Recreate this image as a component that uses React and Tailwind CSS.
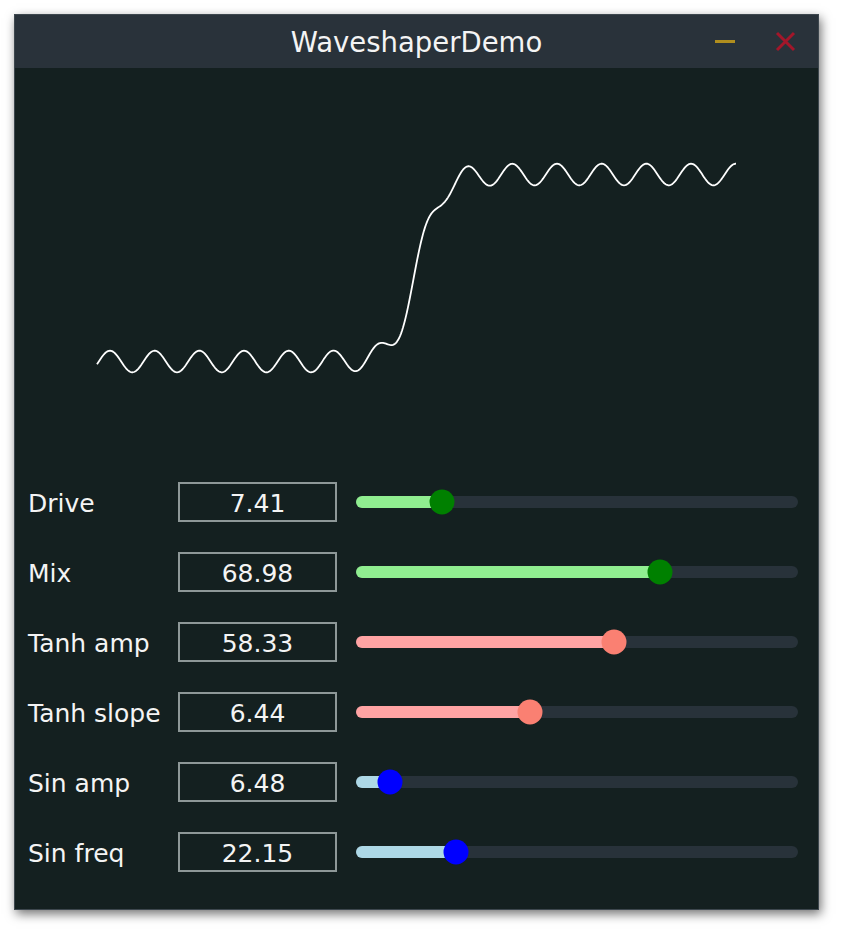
import React from "react";

// Slider rows — thumb position is px from track start (track is 443px)
const ROWS = [
  { label: "Drive", value: "7.41", pos: 86, fill: "bg-[#90ee90]", thumb: "bg-[#008000]" },
  { label: "Mix", value: "68.98", pos: 304, fill: "bg-[#90ee90]", thumb: "bg-[#008000]" },
  { label: "Tanh amp", value: "58.33", pos: 258, fill: "bg-[#ffa3a3]", thumb: "bg-[#fa8072]" },
  { label: "Tanh slope", value: "6.44", pos: 174, fill: "bg-[#ffa3a3]", thumb: "bg-[#fa8072]" },
  { label: "Sin amp", value: "6.48", pos: 34, fill: "bg-[#add8e6]", thumb: "bg-[#0000ff]" },
  { label: "Sin freq", value: "22.15", pos: 100, fill: "bg-[#add8e6]", thumb: "bg-[#0000ff]" },
];

function wavePath() {
  const pts = [];
  for (let x = 97; x <= 736; x += 1) {
    const y =
      268 -
      93.5 * Math.tanh(0.042 * (x - 417)) -
      10.8 * Math.sin((2 * Math.PI * (x - 98.8)) / 44.7);
    pts.push(`${x - 15},${(y - 68).toFixed(2)}`);
  }
  return "M" + pts.join(" L");
}

function Slider({ pos, fill, thumb }) {
  return (
    <div className="relative h-[12px] flex-1 rounded-full bg-[#28323a]">
      <div className={`h-full rounded-full ${fill}`} style={{ width: pos }} />
      <div
        className={`absolute top-1/2 h-[25px] w-[25px] -translate-x-1/2 -translate-y-1/2 rounded-full ${thumb}`}
        style={{ left: pos }}
      />
    </div>
  );
}

export default function App() {
  return (
    <div className="min-h-screen bg-white pl-[14px] pt-[14px]" style={{ fontFamily: "'DejaVu Sans', Verdana, sans-serif" }}>
      <div className="flex h-[896px] w-[805px] flex-col border border-[#3d474e] bg-[#142020] shadow-[2px_4px_10px_rgba(0,0,0,0.55)]">
        {/* Title bar */}
        <div className="relative flex h-[53px] shrink-0 items-center justify-center bg-[#29323a]">
          <span className="pt-[3px] text-[27.5px] leading-none text-[#f4f4f4]">WaveshaperDemo</span>
          <div className="absolute right-[22px] top-0 flex h-full items-center gap-[40px]">
            <div className="h-[3px] w-[20px] bg-[#b08e1e]" />
            <svg width="21" height="21" viewBox="0 0 21 21">
              <path d="M2 2 L19 19 M19 2 L2 19" stroke="#a3162a" strokeWidth="3" />
            </svg>
          </div>
        </div>

        {/* Plot */}
        <div className="h-[414px] shrink-0">
          <svg width="803" height="414" viewBox="0 0 803 414">
            <path d={wavePath()} fill="none" stroke="#ffffff" strokeWidth="1.8" strokeLinejoin="round" />
          </svg>
        </div>

        {/* Controls */}
        <div className="flex flex-col gap-[30px] pl-[13px] pr-[20px]">
          {ROWS.map((r) => (
            <div key={r.label} className="flex h-[40px] items-center">
              <span className="w-[150px] pt-[4px] text-[25px] text-[#f4f4f4]">{r.label}</span>
              <div className="flex h-[40px] w-[159px] items-center justify-center border-2 border-[#8e9898] pt-[3px] text-[25px] text-[#f4f4f4]">
                {r.value}
              </div>
              <div className="ml-[19px] flex flex-1">
                <Slider pos={r.pos} fill={r.fill} thumb={r.thumb} />
              </div>
            </div>
          ))}
        </div>
      </div>
    </div>
  );
}
